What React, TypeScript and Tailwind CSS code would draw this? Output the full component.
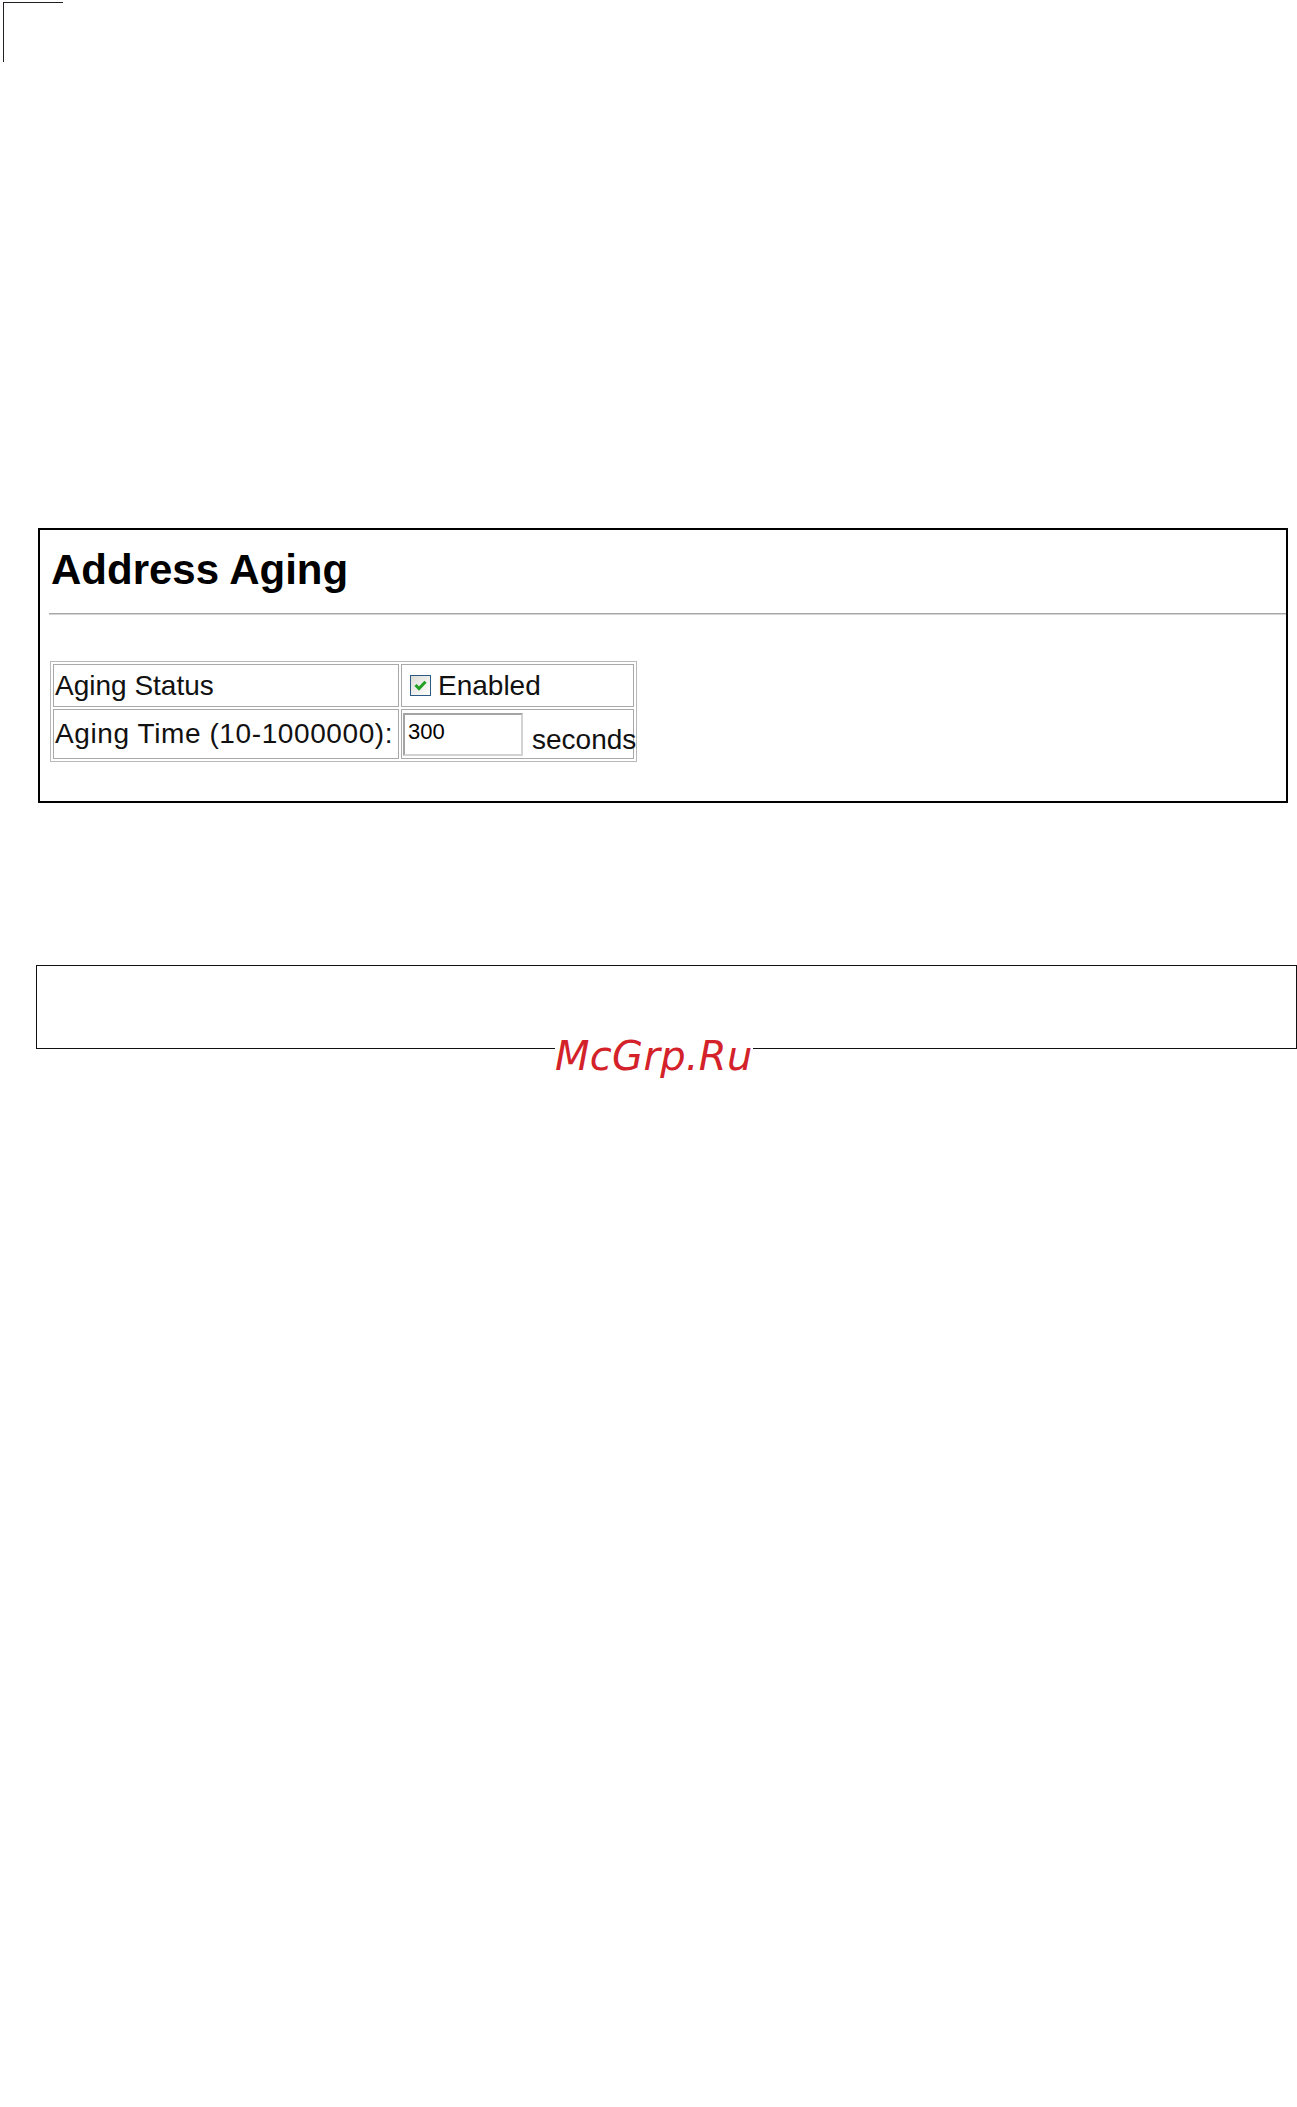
import type { ReactNode } from "react";

function CheckedBox() {
  return (
    <svg width="21" height="21" viewBox="0 0 21 21" className="shrink-0">
      <defs>
        <linearGradient id="cb-fill" x1="0" y1="0" x2="1" y2="1">
          <stop offset="0" stopColor="#dcdcd7" />
          <stop offset="1" stopColor="#ffffff" />
        </linearGradient>
      </defs>
      <rect x="0.5" y="0.5" width="20" height="20" fill="url(#cb-fill)" stroke="#2b5a84" />
      <path d="M5.5 10 L9 13.6 L15.5 6.8" fill="none" stroke="#21a121" strokeWidth="3" />
    </svg>
  );
}

function Cell({ children, className = "" }: { children: ReactNode; className?: string }) {
  return <td className={`border border-[#a9a9a9] align-middle ${className}`}>{children}</td>;
}

export default function App() {
  return (
    <div className="min-h-[2107px] bg-white pt-[2px] font-['Liberation_Sans',Arial,sans-serif] text-[#111]">
      {/* crop mark */}
      <div className="ml-[3px] h-[60px] w-[60px] border-l border-t border-[#231f20]" />

      <section className="ml-[38px] mt-[466px] w-[1250px] border-2 border-black pb-[39px] pl-[9px]">
        <h1 className="ml-[2px] pt-[19px] text-[42px] font-bold leading-none text-black">Address Aging</h1>
        <div className="mt-[22px] h-[2px] border-t border-[#a8a8a8] bg-[#d4d4d4]" />

        <table className="ml-[1px] mt-[46px] w-[587px] table-fixed border-separate border-spacing-[2px] border border-[#b9b9b9] text-[28px] leading-[32px]">
          <tbody>
            <tr>
              <Cell className="h-[43px] w-[346px] px-[1px]">Aging Status</Cell>
              <Cell className="pl-[8px]">
                <div className="flex items-center gap-[7px]">
                  <CheckedBox />
                  <span>Enabled</span>
                </div>
              </Cell>
            </tr>
            <tr>
              <Cell className="h-[50px] px-[1px] whitespace-nowrap tracking-[0.6px]">Aging Time (10-1000000):</Cell>
              <Cell className="px-[1px]">
                <div className="flex items-end gap-[9px] whitespace-nowrap">
                  <input
                    type="text"
                    readOnly
                    defaultValue="300"
                    className="h-[43px] w-[120px] shrink-0 border-2 border-t-[#a4a4a4] border-l-[#a4a4a4] border-b-[#d2d2d2] border-r-[#d2d2d2] px-[3px] pb-[4px] text-[22px] leading-none text-black outline-none"
                  />
                  <span>seconds</span>
                </div>
              </Cell>
            </tr>
          </tbody>
        </table>
      </section>

      <section className="relative ml-[36px] mt-[162px] h-[84px] w-[1261px] border border-[#111]">
        <div className="absolute left-[518px] top-[70px] bg-white text-[40px] italic leading-none tracking-[0.3px] text-[#d3222a] font-['DejaVu_Sans',Verdana,sans-serif]">
          McGrp.Ru
        </div>
      </section>
    </div>
  );
}
